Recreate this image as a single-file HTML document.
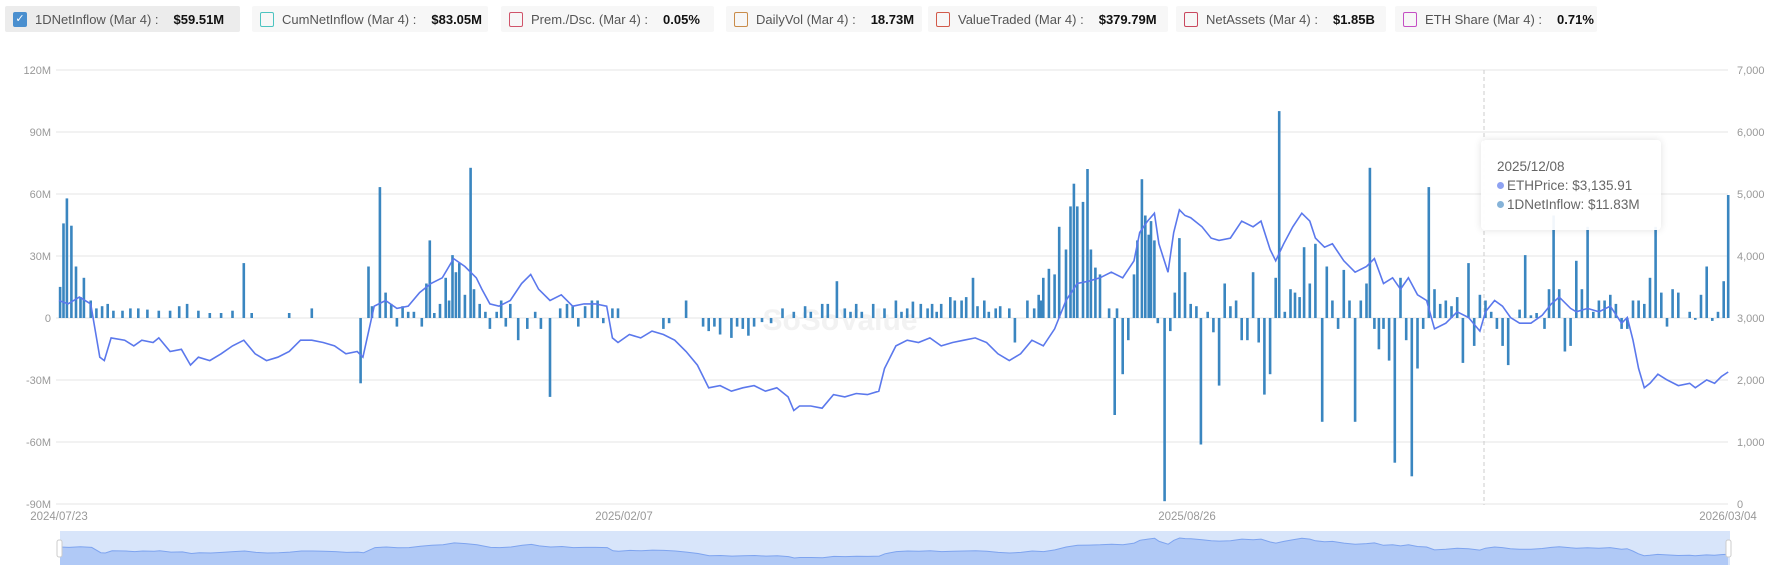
<!DOCTYPE html>
<html><head><meta charset="utf-8"><style>
body{margin:0;width:1778px;height:577px;background:#fff;font-family:"Liberation Sans",sans-serif;overflow:hidden;position:relative}
.lg{position:absolute;top:6px;height:26px;background:#f7f7f7;border-radius:2px;font-size:13px;color:#555;display:flex;align-items:center;white-space:nowrap}
.lg.on{background:#ececec}
.cb{width:14px;height:15px;border:1.5px solid;border-radius:2px;margin:0 8px 0 8px;box-sizing:border-box}
.lg b{color:#111;margin-left:15px;font-weight:bold}
.tt{position:absolute;left:1481px;top:140px;width:180px;height:90px;background:rgba(255,255,255,.93);box-shadow:0 0 8px rgba(0,0,0,.12);border-radius:4px;font-size:13.5px;color:#666;box-sizing:border-box;padding:17px 0 0 16px;line-height:19px}
.dot{display:inline-block;width:7px;height:7px;border-radius:50%;margin-right:3px;vertical-align:1px}
</style></head><body>
<div class="lg on" style="left:5px;width:235px"><div class="cb" style="background:#4a8fcf;border-color:#4a8fcf;color:#fff;font-size:11px;line-height:12px;text-align:center">✓</div>1DNetInflow (Mar 4) :<b>$59.51M</b></div>
<div class="lg" style="left:252px;width:236px"><div class="cb" style="border-color:#4cc3c0"></div>CumNetInflow (Mar 4) :<b>$83.05M</b></div>
<div class="lg" style="left:501px;width:213px"><div class="cb" style="border-color:#d0546a"></div>Prem./Dsc. (Mar 4) :<b>0.05%</b></div>
<div class="lg" style="left:726px;width:196px"><div class="cb" style="border-color:#c98c4a"></div>DailyVol (Mar 4) :<b>18.73M</b></div>
<div class="lg" style="left:928px;width:240px"><div class="cb" style="border-color:#d25a4a"></div>ValueTraded (Mar 4) :<b>$379.79M</b></div>
<div class="lg" style="left:1176px;width:210px"><div class="cb" style="border-color:#c9485e"></div>NetAssets (Mar 4) :<b>$1.85B</b></div>
<div class="lg" style="left:1395px;width:202px"><div class="cb" style="border-color:#c44fc4"></div>ETH Share (Mar 4) :<b>0.71%</b></div>
<svg id="s" width="1778" height="577" style="position:absolute;left:0;top:0"></svg>
<div class="tt">2025/12/08<br><span class="dot" style="background:#8ea2f2"></span>ETHPrice: $3,135.91<br><span class="dot" style="background:#86b3d8"></span>1DNetInflow: $11.83M</div>
<script>
var S=1.134,svg='';
var lab=['120M','90M','60M','30M','0','-30M','-60M','-90M'],rl=['7,000','6,000','5,000','4,000','3,000','2,000','1,000','0'];
for(var i=0;i<8;i++){var y=70+i*62;svg+='<line x1="56" x2="1728" y1="'+y+'" y2="'+y+'" stroke="#e6e6e6"/>';
svg+='<text x="51" y="'+(y+4)+'" text-anchor="end" font-size="11" fill="#999">'+lab[i]+'</text><text x="1737" y="'+(y+4)+'" font-size="11" fill="#999">'+rl[i]+'</text>';}
svg+='<text x="840" y="330" font-size="30" font-weight="bold" fill="#f2f2f2" text-anchor="middle">SoSoValue</text>';
svg+='<line x1="1484" x2="1484" y1="70" y2="505" stroke="#ccc" stroke-dasharray="4,3"/>';
var B="53:253,56:197,59:175,63:199,67:235,71:262,74:245,80:265,85:272,90:270,95:268,100:274,108:274,115:272,122:272,130:273,140:274,150:274,158:270,165:268,175:274,185:276,195:276,205:274,215:232,222:276,255:276,275:272,318:338,325:235,328:270,335:165,340:258,345:268,350:288,355:270,360:275,365:275,372:288,376:250,379:212,383:276,388:268,393:245,396:265,399:225,402:240,405:232,410:260,415:148,418:255,423:268,428:275,432:290,438:275,442:265,446:288,450:268,457:300,465:290,472:275,477:290,485:350,494:272,500:268,505:270,510:288,516:270,522:265,527:265,532:285,540:272,545:272,585:290,590:285,605:265,620:288,625:292,630:288,635:295,645:298,650:288,655:290,660:296,665:288,672:284,680:285,690:272,700:275,710:270,715:275,725:268,730:268,738:248,745:272,750:275,755:268,760:275,770:268,780:272,790:265,795:275,800:272,805:266,812:268,818:272,822:268,826:275,830:268,838:262,842:265,848:265,852:262,858:245,862:270,868:265,872:275,878:272,882:270,890:272,895:302,906:265,912:272,916:260,918:265,920:245,925:237,930:242,934:200,940:220,944:182,947:162,950:182,955:178,959:149,962:220,966:236,970:242,978:272,983:366,985:272,990:330,995:300,1000:242,1003:212,1007:158,1010:190,1013:207,1015:195,1018:212,1021:285,1027:442,1032:292,1036:258,1040:210,1045:240,1050:268,1055:270,1059:392,1065:275,1070:293,1075:340,1080:250,1085:270,1090:265,1095:300,1100:300,1105:240,1110:302,1115:348,1120:330,1125:245,1128:98,1133:275,1138:255,1142:258,1146:262,1150:218,1155:250,1160:215,1166:372,1170:235,1175:265,1180:290,1185:238,1190:265,1195:372,1200:265,1205:250,1208:148,1212:290,1216:308,1220:290,1225:318,1230:408,1235:245,1240:300,1245:420,1250:325,1255:290,1260:165,1265:255,1270:268,1275:265,1280:270,1285:262,1290:320,1295:232,1300:305,1305:260,1310:265,1315:275,1320:290,1325:305,1330:322,1340:273,1345:225,1350:278,1355:276,1362:290,1366:255,1370:190,1375:255,1380:310,1385:305,1390:230,1395:255,1400:200,1405:275,1410:265,1415:265,1420:260,1425:268,1430:290,1435:290,1440:265,1445:265,1450:268,1455:245,1460:200,1465:258,1470:288,1475:255,1480:258,1490:275,1495:282,1500:260,1505:235,1510:283,1515:275,1520:248,1524:172";
B.split(',').forEach(function(p){var a=p.split(':'),x=a[0]*S,y=a[1]*S,z=318;svg+='<rect x="'+(x-1.3).toFixed(1)+'" width="2.6" y="'+Math.min(y,z).toFixed(1)+'" height="'+Math.abs(y-z).toFixed(1)+'" fill="#3a86c0"/>';});
var L="52,265,60,268,70,262,80,268,88,315,92,318,98,298,110,300,118,305,125,300,135,302,140,298,150,310,160,308,168,322,175,315,185,318,195,312,205,305,215,300,225,312,235,318,245,315,255,310,265,300,275,300,285,302,295,305,305,312,315,310,320,315,330,270,340,265,350,272,360,270,370,258,380,250,390,245,400,228,410,235,420,245,425,255,432,268,440,270,450,265,460,250,468,242,475,255,485,265,495,260,505,270,515,268,525,268,535,270,540,298,545,302,555,295,565,298,575,292,585,295,595,300,605,310,615,322,625,342,635,340,645,345,655,342,665,340,675,345,685,342,695,350,700,362,705,358,715,358,725,360,735,348,745,350,755,347,765,348,775,345,780,325,790,305,800,300,810,302,820,298,830,305,840,302,850,300,860,298,870,302,880,312,890,318,900,312,910,300,920,305,930,290,940,265,950,250,960,248,970,245,980,240,990,245,1000,230,1005,205,1012,195,1018,188,1022,215,1030,240,1035,205,1040,185,1045,190,1050,192,1060,200,1068,210,1075,212,1085,210,1095,195,1105,200,1112,195,1120,220,1125,230,1132,215,1140,200,1148,188,1155,195,1160,210,1168,218,1175,215,1185,230,1195,240,1205,235,1212,228,1220,250,1228,245,1235,255,1242,245,1250,260,1258,265,1265,290,1275,285,1285,275,1295,280,1305,292,1310,275,1318,265,1325,270,1332,280,1340,285,1350,285,1360,278,1368,268,1375,262,1385,272,1390,275,1400,272,1410,275,1420,270,1430,285,1435,280,1440,300,1445,325,1450,342,1455,338,1462,330,1470,335,1480,340,1490,338,1495,342,1505,335,1512,338,1518,332,1524,328".split(',').map(Number);
var pts=[],mp=[];for(var i=0;i<L.length;i+=2){var x=L[i]*S,y=L[i+1]*S;pts.push(x.toFixed(1)+','+y.toFixed(1));
var mx=60+(L[i]-52)/(1472)*(1728-60),my=538+(L[i+1]-185)/(362-185)*20;mp.push(mx.toFixed(1)+','+my.toFixed(1));}
svg+='<polyline points="'+pts.join(' ')+'" fill="none" stroke="#5b78ec" stroke-width="1.6"/>';
svg+='<text x="59" y="520" text-anchor="middle" font-size="11.5" fill="#999">2024/07/23</text><text x="624" y="520" text-anchor="middle" font-size="11.5" fill="#999">2025/02/07</text><text x="1187" y="520" text-anchor="middle" font-size="11.5" fill="#999">2025/08/26</text><text x="1728" y="520" text-anchor="middle" font-size="11.5" fill="#999">2026/03/04</text>';
svg+='<rect x="60" y="531" width="1670" height="34" fill="#d8e5fa"/>';
svg+='<polygon points="60,565 '+mp.join(' ')+' 1728,565" fill="#b0c9f6" stroke="none"/><polyline points="'+mp.join(' ')+'" fill="none" stroke="#7ea4ef" stroke-width="1"/>';
svg+='<rect x="57" y="540" width="5" height="17" rx="2" fill="#fff" stroke="#ccc"/><rect x="1726" y="540" width="5" height="17" rx="2" fill="#fff" stroke="#ccc"/>';
document.getElementById('s').innerHTML=svg;
</script>
</body></html>
